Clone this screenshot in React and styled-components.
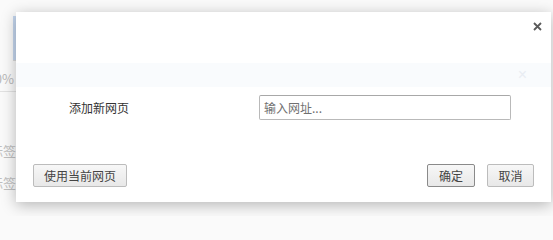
import styled, { createGlobalStyle } from 'styled-components'

const GlobalStyle = createGlobalStyle`
    html, body {
        margin: 0;
        padding: 0;
        background: #fafafa;
    }
    body {
        font-family: "Noto Sans CJK SC", "Liberation Sans", sans-serif;
        font-size: 12px;
        color: #333;
    }
`

const App = () => {
    return (
        <Page>
            <GlobalStyle/>

            <Backdrop>
                <BlueEdge/>
                <Percent>100%</Percent>
                <FadedTag gap={50}>标签</FadedTag>
                <FadedTag gap={14}>标签</FadedTag>
            </Backdrop>

            <Dialog>
                <TopBar>
                    <CloseButton aria-label="关闭">
                        <svg width="9" height="9" viewBox="0 0 9 9">
                            <path d="M1 1 L8 8 M8 1 L1 8" stroke="#5a5a5a" strokeWidth="1.8"/>
                        </svg>
                    </CloseButton>
                </TopBar>

                <GhostBand>
                    <GhostClose>×</GhostClose>
                </GhostBand>

                <FieldRow>
                    <FieldLabel>添加新网页</FieldLabel>
                    <UrlInput placeholder="输入网址..." />
                </FieldRow>

                <Footer>
                    <Button>使用当前网页</Button>
                    <Actions>
                        <Button primary>确定</Button>
                        <Button>取消</Button>
                    </Actions>
                </Footer>
            </Dialog>
        </Page>
    )
}

export default App

const Page = styled.div`
    position: relative;
    width: 553px;
    height: 216px;
    overflow: hidden;
    background: #fafafa;
`

const Backdrop = styled.div`
    width: 16px;
    display: flex;
    flex-direction: column;
    align-items: flex-end;
    overflow: hidden;
    padding-top: 16px;
`

const BlueEdge = styled.div`
    width: 3px;
    height: 44px;
    background: #c4d6ee;
    border-bottom: 1px solid #d8d8d8;
`

const Percent = styled.div`
    width: 40px;
    height: 24px;
    line-height: 24px;
    text-align: right;
    color: #b8b8b8;
    font-size: 13px;
    border-bottom: 1px solid #e2e2e2;
    margin-top: 6px;
    padding-right: 2px;
`

const FadedTag = styled.div`
    width: 40px;
    text-align: right;
    color: #c0c0c0;
    font-size: 13px;
    line-height: 18px;
    margin-top: ${p => p.gap}px;
`

const Dialog = styled.div`
    position: absolute;
    left: 16px;
    top: 12px;
    width: 535px;
    height: 190px;
    background: #fff;
    box-shadow: 0 3px 14px rgba(0, 0, 0, 0.28);
    display: flex;
    flex-direction: column;
`

const TopBar = styled.div`
    height: 51px;
    display: flex;
    justify-content: flex-end;
    align-items: flex-start;
    padding: 10px 9px 0 0;
    box-sizing: border-box;
`

const CloseButton = styled.button`
    border: 0;
    background: none;
    padding: 0;
    width: 9px;
    height: 9px;
    display: flex;
    cursor: pointer;
`

const GhostBand = styled.div`
    height: 24px;
    background: #f9fbfd;
    display: flex;
    justify-content: flex-end;
    align-items: center;
    padding-right: 24px;
`

const GhostClose = styled.span`
    color: #e9edf3;
    font-size: 16px;
    font-family: "Liberation Sans", sans-serif;
`

const FieldRow = styled.div`
    display: grid;
    grid-template-columns: 190px 252px;
    align-items: center;
    margin-top: 8px;
    padding-left: 53px;
`

const FieldLabel = styled.label`
    font-size: 12px;
    color: #333;
`

const UrlInput = styled.input`
    box-sizing: border-box;
    width: 252px;
    height: 25px;
    border: 1px solid #b9b9b9;
    border-top-color: #a8a8a8;
    border-radius: 2px;
    padding: 0 4px;
    font-family: inherit;
    font-size: 12px;
    color: #333;
    outline: none;

    &::placeholder {
        color: #707070;
    }
`

const Footer = styled.div`
    margin-top: auto;
    display: flex;
    justify-content: space-between;
    align-items: center;
    padding: 0 17px 15px 17px;
`

const Actions = styled.div`
    display: flex;
    gap: 12px;
`

const Button = styled.button`
    box-sizing: border-box;
    height: 23px;
    min-width: ${p => p.primary ? 48 : 47}px;
    padding: 0 10px;
    border: 1px solid ${p => p.primary ? '#8a8a8a' : '#bcbcbc'};
    border-radius: 2px;
    background: linear-gradient(#f7f7f7, #e8e8e8);
    font-family: inherit;
    font-size: 12px;
    color: #444;
    cursor: pointer;
`
